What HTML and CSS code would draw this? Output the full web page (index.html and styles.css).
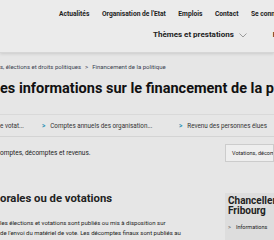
FILE: index.html
```html
<!DOCTYPE html>
<html lang="fr">
<head>
    <meta charset="UTF-8">
    <meta name="viewport" content="width=device-width, initial-scale=1.0">
    <title>Financement de la politique</title>
    <link rel="stylesheet" href="styles.css">
</head>
<body>
    <header class="site-header">
        <nav class="top-links">
            <a href="#">Actualités</a>
            <a href="#">Organisation de l'Etat</a>
            <a href="#">Emplois</a>
            <a href="#">Contact</a>
            <a href="#">Se connecter</a>
        </nav>
        <nav class="main-nav">
            <a href="#" class="menu-item">Thèmes et prestations
                <svg class="chevron" width="8" height="5" viewBox="0 0 8 5"><path d="M0.5 0.5 L4 4 L7.5 0.5" fill="none" stroke="#9a9a9a" stroke-width="1"/></svg>
            </a>
            <a href="#" class="menu-item lang">Fr</a>
        </nav>
    </header>

    <main class="page">
        <div class="breadcrumb">
            <span>s, élections et droits politiques</span>
            <span class="sep">&gt;</span>
            <span>Financement de la politique</span>
        </div>

        <h1 class="title">es informations sur le financement de la politique</h1>

        <div class="tabs">
            <a href="#" class="tab first">e votat...</a>
            <a href="#" class="tab"><span class="arrow">&gt;</span>Comptes annuels des organisation...</a>
            <a href="#" class="tab"><span class="arrow">&gt;</span>Revenu des personnes élues</a>
        </div>

        <div class="intro">
            <p>omptes, décomptes et revenus.</p>
            <div class="select">Votations, décomptes</div>
        </div>

        <div class="content">
            <section class="article">
                <h2>orales ou de votations</h2>
                <p>les élections et votations sont publiés ou mis à disposition sur<br>de l'envoi du matériel de vote. Les décomptes finaux sont publiés au</p>
            </section>
            <aside class="sidebar">
                <h3>Chancellerie d'Etat<br>Fribourg</h3>
                <a href="#"><span class="arrow">&gt;</span>Informations</a>
            </aside>
        </div>
    </main>
</body>
</html>
```

FILE: styles.css
```css
body {
    margin: 0;
    width: 274px;
    height: 240px;
    overflow: hidden;
    background-color: #e6e6e6;
    font-family: Roboto, "Open Sans", sans-serif;
    color: #222222;
}
a {
    color: inherit;
    text-decoration: none;
}
.site-header {
    height: 53px;
    background-color: #ebebeb;
    border-bottom: 1px solid #d6d6d6;
    box-shadow: 0 1px 3px rgba(0, 0, 0, 0.12);
    box-sizing: border-box;
}
.top-links {
    display: flex;
    gap: 12.5px;
    height: 18px;
    padding: 10px 0 0 59px;
    font-size: 6.7px;
    line-height: 8px;
    font-weight: 700;
    white-space: nowrap;
    overflow: hidden;
    box-sizing: border-box;
}
.main-nav {
    display: flex;
    gap: 26px;
    padding: 12px 0 0 153px;
    font-size: 8px;
    line-height: 10px;
    font-weight: 700;
    white-space: nowrap;
    overflow: hidden;
}
.menu-item {
    display: flex;
    align-items: center;
    gap: 5px;
    flex-shrink: 0;
}
.chevron {
    margin-top: 1px;
}
.page {
    white-space: nowrap;
    overflow: hidden;
}
.breadcrumb {
    display: flex;
    gap: 4px;
    padding-top: 10px;
    font-size: 6px;
    line-height: 8px;
    color: #3a4150;
}
.title {
    margin: 8px 0 0;
    font-size: 14.5px;
    font-weight: 700;
    line-height: 20px;
    color: #111111;
}
.tabs {
    display: flex;
    align-items: center;
    height: 23px;
    margin-top: 15px;
    border-top: 1px solid #d9d9d9;
    border-bottom: 1px solid #d4d4d4;
    box-sizing: border-box;
    font-size: 6.3px;
    color: #333333;
}
.tab {
    display: flex;
    align-items: center;
    flex-shrink: 0;
}
.tab.first {
    width: 42px;
}
.tab + .tab {
    width: 137px;
}
.arrow {
    color: #2a93b5;
    margin-right: 5px;
    font-weight: 700;
}
.intro {
    display: flex;
    justify-content: space-between;
    align-items: center;
    margin-top: 7px;
}
.intro p {
    margin: 0;
    font-size: 6.5px;
}
.select {
    width: 49px;
    height: 18px;
    box-sizing: border-box;
    padding: 0 6px;
    line-height: 16px;
    border: 1px solid #cccccc;
    background-color: #eeeeee;
    font-size: 5.5px;
    overflow: hidden;
}
.content {
    display: flex;
    justify-content: space-between;
    margin-top: 30px;
}
.article h2 {
    margin: 0;
    font-size: 11.3px;
    font-weight: 700;
    line-height: 14px;
}
.article p {
    margin: 12px 0 0;
    font-size: 6px;
    line-height: 10px;
}
.sidebar {
    width: 49px;
    height: 50px;
    margin-top: 1px;
    box-sizing: border-box;
    padding: 3px 0 0 3px;
    background-color: #dddddd;
    overflow: hidden;
}
.sidebar h3 {
    margin: 0;
    font-size: 10px;
    font-weight: 700;
    line-height: 10px;
}
.sidebar a {
    display: block;
    margin-top: 8px;
    font-size: 5.5px;
}
.sidebar .arrow {
    color: #555555;
    font-weight: 400;
}
```
